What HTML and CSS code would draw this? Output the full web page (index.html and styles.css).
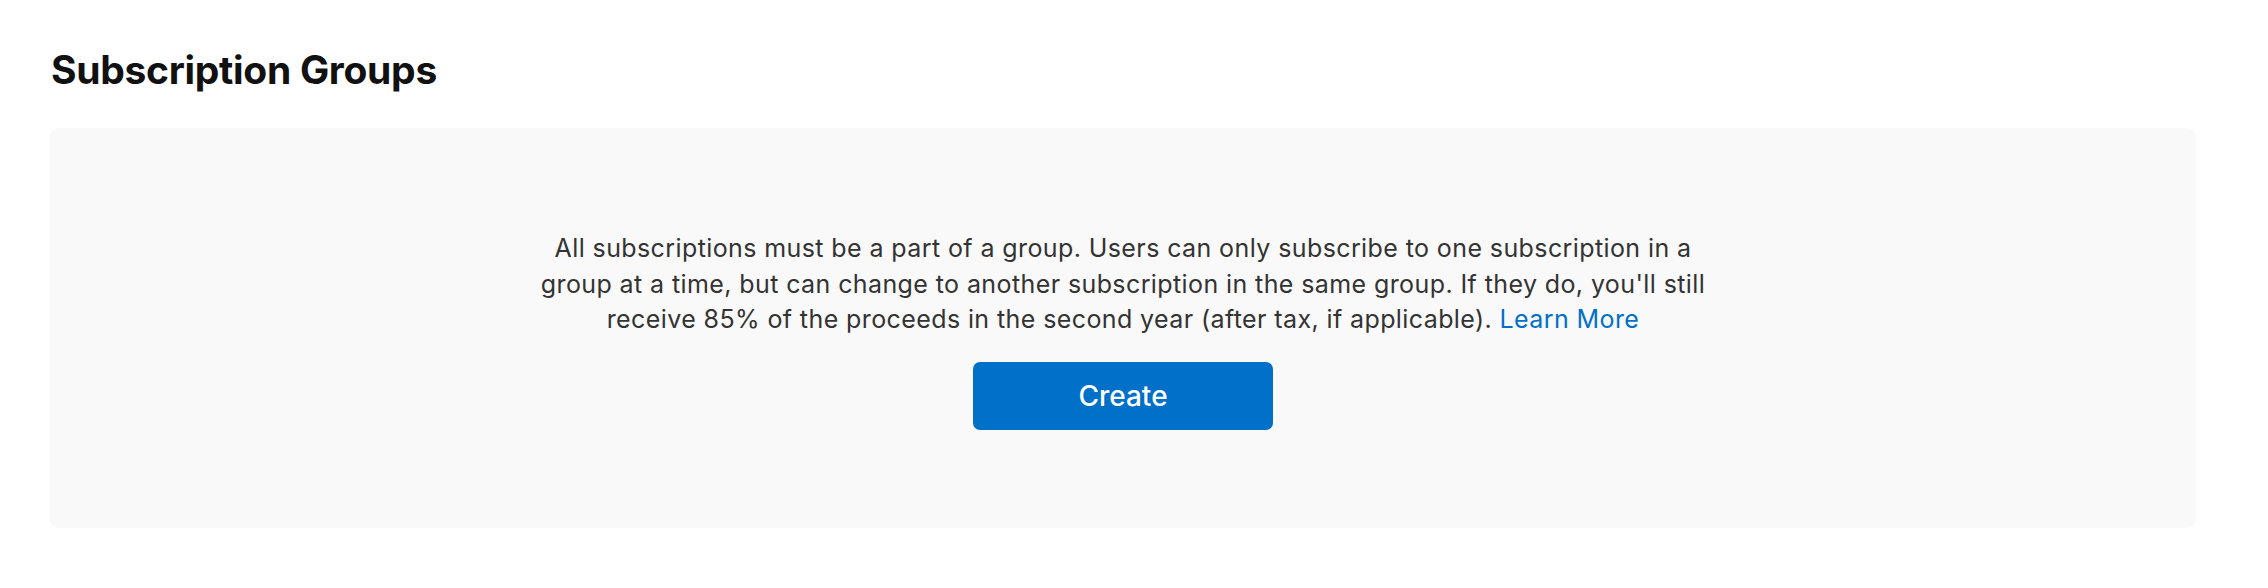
FILE: index.html
```html
<!DOCTYPE html>
<html lang="en">
<head>
<meta charset="utf-8">
<title>Subscription Groups</title>
<link rel="stylesheet" href="styles.css">
</head>
<body>
<main class="page">
  <h1 class="title">Subscription Groups</h1>
  <section class="empty">
    <p class="empty__text">All subscriptions must be a part of a group. Users can only subscribe to one subscription in a group at a time, but can change to another subscription in the same group. If they do, you'll still receive 85% of the proceeds in the second year (after tax, if applicable). <a class="link" href="#">Learn More</a></p>
    <button class="btn" type="button">Create</button>
  </section>
</main>
</body>
</html>
```

FILE: styles.css
```css
html, body {
  margin: 0;
  padding: 0;
  background: #ffffff;
}

body {
  font-family: Inter, "Noto Sans", "Liberation Sans", sans-serif;
  color: #333333;
}

.page {
  padding: 46px 72px 60px 50px;
}

.title {
  margin: 0 0 34px 1px;
  font-size: 39px;
  line-height: 48px;
  font-weight: 700;
  color: #111111;
  letter-spacing: -0.3px;
}

.empty {
  background: #f9f9f9;
  border-radius: 9px;
  height: 400px;
  box-sizing: border-box;
  padding: 103px 0 0;
  display: flex;
  flex-direction: column;
  align-items: center;
}

.empty__text {
  margin: 0 0 24px;
  max-width: 1185px;
  text-align: center;
  font-size: 25px;
  line-height: 35.5px;
  letter-spacing: 0.4px;
  color: #333333;
}

.link {
  color: #0070c9;
  text-decoration: none;
}

.btn {
  width: 300px;
  height: 68px;
  border: none;
  border-radius: 7px;
  background: #0070c9;
  color: #ffffff;
  font-family: Inter, "Noto Sans", "Liberation Sans", sans-serif;
  font-size: 28px;
  font-weight: 500;
  cursor: pointer;
}
```
